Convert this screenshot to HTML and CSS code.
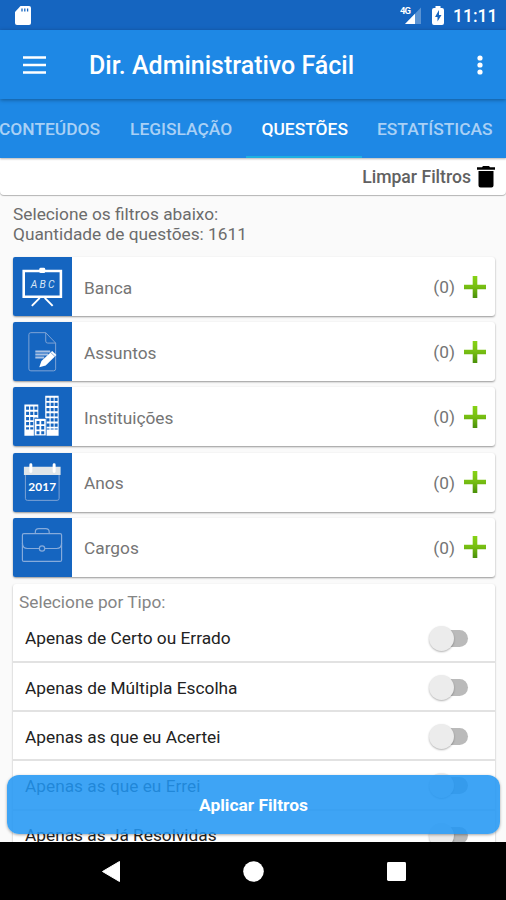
FILE: index.html
```html
<!DOCTYPE html>
<html lang="pt-BR">
<head>
<meta charset="utf-8">
<title>Dir. Administrativo Fácil</title>
<link rel="stylesheet" href="styles.css">
</head>
<body>
<div class="screen">
  <header class="status">
    <svg class="sd" width="16" height="19" viewBox="0 0 16 19"><path d="M5.500 0H14a2 2 0 0 1 2 2v15a2 2 0 0 1-2 2H2a2 2 0 0 1-2-2V6z" fill="#fff"/><path d="M7 2.500v3M9.800 2.500v3M12.600 2.500v3" stroke="#1565c0" stroke-width="1.300"/></svg>
    <div class="status-right">
      <svg width="22" height="20" viewBox="0 0 22 20"><path d="M21 1.500V18H5z" fill="#5b93d3"/><path d="M15 7.700V18H5z" fill="#fff"/><text class="network" x="0" y="8" textLength="11">4G</text></svg>
      <svg width="12" height="19" viewBox="0 0 12 19"><path d="M3.500 2V0h5v2H10a2 2 0 0 1 2 2v13a2 2 0 0 1-2 2H2a2 2 0 0 1-2-2V4a2 2 0 0 1 2-2z" fill="#fff"/><path d="M7 4L3 11h2.500v4.500L9.500 9H7z" fill="#1565c0"/></svg>
      <span class="clock">11:11</span>
    </div>
  </header>
  <div class="appbar">
    <svg class="menu" width="23" height="18" viewBox="0 0 23 18"><path d="M0 1.500h23M0 9h23M0 16.500h23" stroke="#fff" stroke-width="2.500"/></svg>
    <h1>Dir. Administrativo Fácil</h1>
    <svg class="more" width="6" height="20" viewBox="0 0 6 20" fill="#fff"><circle cx="3" cy="3" r="2.600"/><circle cx="3" cy="10" r="2.600"/><circle cx="3" cy="17" r="2.600"/></svg>
  </div>
  <nav class="tabs">
    <span class="tab first">CONTEÚDOS</span><span class="tab second">LEGISLAÇÃO</span><span class="tab active">QUESTÕES</span><span class="tab last">ESTATÍSTICAS</span>
  </nav>
  <div class="clear"><span>Limpar Filtros</span><svg width="18" height="22" viewBox="0 0 18 22"><path d="M0 1.200h5L6 0h6l1 1.200h5v2.500H0zM1.500 5h15v14.500a2 2 0 0 1-2 2h-11a2 2 0 0 1-2-2z"/></svg></div>
  <main>
    <div class="intro">Selecione os filtros abaixo:<br>Quantidade de questões: 1611</div>
    <section class="filters">
      <div class="filter">
        <svg class="tile" viewBox="0 0 59 59"><g fill="none" stroke="#fff"><path d="M10.800 13.800h37.500v26H10.800z" stroke-width="2.600"/><path d="M27 41l-8 8M32 41l8 8" stroke-width="2"/></g><rect x="26.500" y="10.500" width="6" height="5.500" rx="1.500" fill="#fff"/><text class="board" x="18" y="31" textLength="24">ABC</text></svg>
        <span class="label">Banca</span><span class="count">(0)</span>
        <svg class="plus" viewBox="0 0 22 22"><path d="M8.700 0h4.600v8.700H22v4.600h-8.700V22H8.700v-8.700H0V8.700h8.700z" fill="url(#green)"/></svg>
      </div>
      <div class="filter">
        <svg class="tile" viewBox="0 0 59 59"><g fill="none" stroke="#7fa4d5"><path d="M33 10.500H18q-2 0-2 2V47q0 2 2 2h23q2 0 2-2V21L33 10.500V19q0 2 2 2h8"/><path d="M22.500 29.500h15M22.500 32.500h13M22.500 35.500h9" stroke="#a9c1e3" stroke-width="2"/></g><path d="M26.500 45.500l2.200-6.500L39.500 29l4.300 4L33 43.500z" fill="#fff"/><path d="M38 30.500l4.300 4" stroke="#6e9ad2" stroke-width=".8"/></svg>
        <span class="label">Assuntos</span><span class="count">(0)</span>
        <svg class="plus" viewBox="0 0 22 22"><path d="M8.700 0h4.600v8.700H22v4.600h-8.700V22H8.700v-8.700H0V8.700h8.700z" fill="url(#green)"/></svg>
      </div>
      <div class="filter">
        <svg class="tile" viewBox="0 0 59 59"><path d="M11.500 17.500h14v14h7v-23h13.500v40.500H11.500z" fill="#fff"/><path d="M21.500 31.500h12V49h-12z" fill="#fff" stroke="#1565c0" stroke-width=".8"/><g stroke="#1565c0" stroke-width="3" stroke-dasharray="3.300 1.900"><path d="M14.700 19.500v23M18.900 19.500v23M23.100 19.500v11M35.300 10.500v32M39.500 10.500v32M43.500 10.500v32M25.200 34v13.500M30 34v13.500"/></g></svg>
        <span class="label">Instituições</span><span class="count">(0)</span>
        <svg class="plus" viewBox="0 0 22 22"><path d="M8.700 0h4.600v8.700H22v4.600h-8.700V22H8.700v-8.700H0V8.700h8.700z" fill="url(#green)"/></svg>
      </div>
      <div class="filter">
        <svg class="tile" viewBox="0 0 59 59"><path d="M12.500 22v23.500q0 2 2 2h30q2 0 2-2V22" fill="none" stroke="#7fa4d5"/><path d="M11 13.500h37v8.500H11z" fill="#dfe5e9"/><path d="M18 11.500v7M41.500 11.500v7" stroke="#fff" stroke-width="3" stroke-linecap="round"/><text class="year" x="15.500" y="38.500" textLength="28">2017</text></svg>
        <span class="label">Anos</span><span class="count">(0)</span>
        <svg class="plus" viewBox="0 0 22 22"><path d="M8.700 0h4.600v8.700H22v4.600h-8.700V22H8.700v-8.700H0V8.700h8.700z" fill="url(#green)"/></svg>
      </div>
      <div class="filter">
        <svg class="tile" viewBox="0 0 59 59"><g fill="none" stroke="#86abdb" stroke-width="1.200"><rect x="9.500" y="15.500" width="39.500" height="28" rx="1.500"/><path d="M22.500 15.500V14q0-3.500 3.500-3.500h7q3.500 0 3.500 3.500v1.500M9.500 25q0 5.500 5 5.500h12M49 25q0 5.500-5 5.500H32"/><circle cx="29.300" cy="30.500" r="2.700"/></g></svg>
        <span class="label">Cargos</span><span class="count">(0)</span>
        <svg class="plus" viewBox="0 0 22 22"><defs><linearGradient id="green" x1="0" y1="0" x2="0" y2="1"><stop offset="0" stop-color="#87d315"/><stop offset=".5" stop-color="#76bd12"/><stop offset="1" stop-color="#498f08"/></linearGradient></defs><path d="M8.700 0h4.600v8.700H22v4.600h-8.700V22H8.700v-8.700H0V8.700h8.700z" fill="url(#green)"/></svg>
      </div>
    </section>
    <section class="types">
      <h2>Selecione por Tipo:</h2>
      <div class="option"><span>Apenas de Certo ou Errado</span><i class="switch"></i></div>
      <div class="option"><span>Apenas de Múltipla Escolha</span><i class="switch"></i></div>
      <div class="option"><span>Apenas as que eu Acertei</span><i class="switch"></i></div>
      <div class="option"><span>Apenas as que eu Errei</span><i class="switch"></i></div>
      <div class="option"><span>Apenas as Já Resolvidas</span><i class="switch"></i></div>
    </section>
  </main>
  <button class="apply">Aplicar Filtros</button>
  <footer class="navbar">
    <svg width="18" height="21" viewBox="0 0 18 21"><path d="M17.500.500v20L.500 10.500z" fill="#fff" stroke="#fff" stroke-linejoin="round"/></svg>
    <svg width="21" height="21" viewBox="0 0 21 21"><circle cx="10.500" cy="10.500" r="10.300" fill="#fff"/></svg>
    <svg width="19" height="19" viewBox="0 0 20 20"><rect width="20" height="20" rx="1.500" fill="#fff"/></svg>
  </footer>
</div>
</body>
</html>
```
FILE: styles.css
```css
* { box-sizing: border-box; }
body { margin: 0; font-family: Roboto, "Liberation Sans", sans-serif; }
svg { display: block; flex: none; }
.screen { position: relative; width: 506px; height: 900px; overflow: hidden; display: flex; flex-direction: column; background: #fafafa; }
.status { height: 30px; flex: none; background: #1565c0; display: flex; justify-content: space-between; padding: 6px 9px 0 15px; }
.status-right { display: flex; color: #fff; }
.status-right svg + svg { margin: 0 9px 0 10px; }
.network { font: 700 9.500px Roboto, sans-serif; fill: #fff; }
.clock { font-size: 17.500px; font-weight: 500; line-height: 21px; width: 44px; white-space: nowrap; }
.appbar { height: 69px; flex: none; background: #1e88e5; display: flex; align-items: center; padding: 0 23px; position: relative; box-shadow: 0 1px 4px rgba(0,0,0,.35); z-index: 1; }
h1 { margin: 2px 0 0 43px; color: #fff; font-size: 25px; line-height: 30px; font-weight: 500; white-space: nowrap; }
.more { margin-left: auto; }
.tabs { height: 59px; flex: none; background: #1e88e5; display: flex; color: #a9d0f5; font-size: 17.400px; font-weight: 500; line-height: 61px; white-space: nowrap; box-shadow: 0 1px 2px rgba(0,0,0,.3); z-index: 0; }
.tab { flex: none; }
.first { width: 131px; margin-left: -1px; }
.second { width: 116px; }
.active { width: 116px; padding-left: 15.500px; color: #fff; border-bottom: 2px solid #1eafe1; }
.last { margin-left: 15px; }
.clear { height: 37px; flex: none; background: #fff; border-radius: 0 0 4px 4px; box-shadow: 0 1px 1px rgba(0,0,0,.28); display: flex; justify-content: flex-end; align-items: center; padding: 1px 11px 0 0; gap: 6px; color: #616161; font-size: 17.600px; font-weight: 500; }
main { flex: 1; min-height: 0; overflow: hidden; padding: 9px 11px 0 13px; }
.intro { font-size: 17.300px; line-height: 20px; color: #6c6c6c; white-space: nowrap; }
.filters { margin-top: 13px; display: flex; flex-direction: column; gap: 6.200px; }
.filter { height: 59px; display: flex; align-items: center; background: #fff; border-radius: 3px; box-shadow: 0 1px 2px rgba(0,0,0,.4); padding-right: 9px; color: #757575; font-size: 17.300px; }
.tile { width: 58.500px; height: 59px; background: #1565c0; border-radius: 2px 0 0 2px; }
.label { margin-left: 12.500px; padding-top: 2px; }
.count { margin-left: auto; padding-top: 1px; }
.plus { width: 22px; height: 22px; margin-left: 9px; }
.board { font: italic 400 10.500px Roboto, sans-serif; fill: #d6e4f5; }
.year { font: 700 12px Lato, Roboto, sans-serif; fill: #fff; }
.types { margin-top: 7px; height: 300px; background: #fff; border-radius: 3px; box-shadow: 0 1px 2px rgba(0,0,0,.34); }
h2 { margin: 0; padding: 8px 0 0 6px; height: 30px; font-size: 17.300px; line-height: 21px; font-weight: 400; color: #858585; }
.option { height: 49.200px; border-bottom: 2px solid #e2e2e2; display: flex; align-items: center; justify-content: space-between; padding: 2px 27px 0 12px; font-size: 17.300px; color: #222; }
.switch { position: relative; width: 33px; height: 17px; border-radius: 9px; background: #bababa; }
.switch::before { content: ""; position: absolute; left: -6px; top: -4px; width: 25px; height: 25px; border-radius: 50%; background: #ececec; box-shadow: 0 1px 2px rgba(0,0,0,.3); }
.apply { position: absolute; left: 7px; top: 775px; width: 493px; height: 59px; border: 0; border-radius: 12px; background: rgba(33,150,243,.87); box-shadow: 0 1px 3px rgba(0,0,0,.35); color: #fff; font: 700 17.400px Roboto, sans-serif; padding: 0; }
.navbar { height: 58px; flex: none; background: #000; display: flex; align-items: center; padding-left: 102px; gap: 123px; }
```
